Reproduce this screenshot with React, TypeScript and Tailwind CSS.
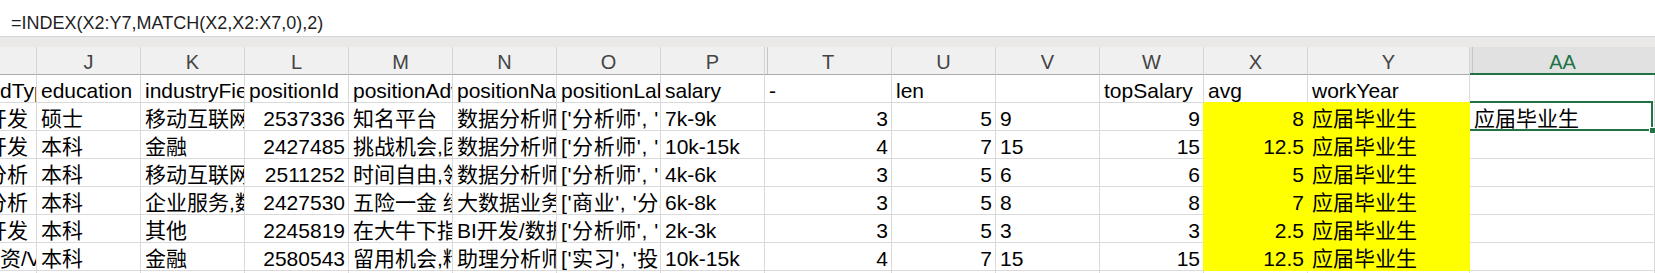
import React from 'react';

type Cell = { t?: string; r?: boolean };

const COLS = ['J', 'K', 'L', 'M', 'N', 'O', 'P', 'T', 'U', 'V', 'W', 'X', 'Y', 'AA'];
const WCLS = [
  'w-[104px]', 'w-[104px]', 'w-[104px]', 'w-[104px]', 'w-[104px]', 'w-[104px]', 'w-[104px]',
  'w-[127px]', 'w-[104px]', 'w-[104px]', 'w-[104px]', 'w-[104px]', 'w-[162px]', 'w-[185px]',
];

const L = (t: string): Cell => ({ t });
const R = (t: string): Cell => ({ t, r: true });
const E: Cell = {};

const ROWS: { i: string; iCls: string; cells: Cell[] }[] = [
  {
    i: 'secondType',
    iCls: '-ml-[56px]',
    cells: [L('education'), L('industryField'), L('positionId'), L('positionAdvantage'), L('positionName'), L('positionLables'), L('salary'), L('-'), L('len'), E, L('topSalary'), L('avg'), L('workYear'), E],
  },
  {
    i: '数据开发',
    iCls: '-ml-[56px]',
    cells: [L('硕士'), L('移动互联网'), R('2537336'), L('知名平台'), L('数据分析师'), L("['分析师', '数据分析']"), L('7k-9k'), R('3'), R('5'), L('9'), R('9'), R('8'), L('应届毕业生'), L('应届毕业生')],
  },
  {
    i: '数据开发',
    iCls: '-ml-[56px]',
    cells: [L('本科'), L('金融'), R('2427485'), L('挑战机会,团队好,扁平管理'), L('数据分析师'), L("['分析师', '数据分析']"), L('10k-15k'), R('4'), R('7'), L('15'), R('15'), R('12.5'), L('应届毕业生'), E],
  },
  {
    i: '数据分析',
    iCls: '-ml-[56px]',
    cells: [L('本科'), L('移动互联网'), R('2511252'), L('时间自由,领导nice'), L('数据分析师'), L("['分析师', '数据分析']"), L('4k-6k'), R('3'), R('5'), L('6'), R('6'), R('5'), L('应届毕业生'), E],
  },
  {
    i: '数据分析',
    iCls: '-ml-[56px]',
    cells: [L('本科'), L('企业服务,数据服务'), R('2427530'), L('五险一金 绩效奖金'), L('大数据业务分析'), L("['商业', '分析']"), L('6k-8k'), R('3'), R('5'), L('8'), R('8'), R('7'), L('应届毕业生'), E],
  },
  {
    i: '数据开发',
    iCls: '-ml-[56px]',
    cells: [L('本科'), L('其他'), R('2245819'), L('在大牛下指导'), L('BI开发/数据分析'), L("['分析师', '数据']"), L('2k-3k'), R('3'), R('5'), L('3'), R('3'), R('2.5'), L('应届毕业生'), E],
  },
  {
    i: '风险投资/VC',
    iCls: '-ml-[63px]',
    cells: [L('本科'), L('金融'), R('2580543'), L('留用机会,精英团队'), L('助理分析师'), L("['实习', '投资']"), L('10k-15k'), R('4'), R('7'), L('15'), R('15'), R('12.5'), L('应届毕业生'), E],
  },
  {
    i: '',
    iCls: '',
    cells: [E, E, E, E, E, E, E, E, E, E, E, E, E, E],
  },
];

function cellColor(row: number, col: number): string {
  const yellowRow = row >= 1 && row <= 6;
  if (yellowRow && (col === 11 || col === 12)) return 'bg-[#ffff00] border-[#ffff00]';
  if (yellowRow && col === 10) return 'border-b-[#dadada] border-r-[#ffff00]';
  if (row === 0 && (col === 11 || col === 12)) return 'border-b-[#ffff00] border-r-[#dadada]';
  return 'border-[#dadada]';
}

function HeaderRow() {
  return (
    <div className="flex h-[28px] bg-[#f0f0f0] text-[20px] leading-[20px] text-[#444444]">
      <div className="w-[37px] h-[28px] shrink-0 border-b border-r border-b-[#ababab] border-r-[#d5d5d5]" />
      {COLS.map((c, i) => {
        if (c === 'AA') {
          return (
            <div
              key={c}
              className="w-[185px] h-[28px] shrink-0 border-b-2 border-b-[#217346] bg-[#e1e1e1] text-[#217346] text-center pt-[5px] shadow-[inset_2px_0_0_#e1e1e1,inset_3px_0_0_#c6c6c6]"
            >
              {c}
            </div>
          );
        }
        const extra = c === 'T' ? ' shadow-[inset_2px_0_0_#f0f0f0,inset_3px_0_0_#c6c6c6]' : '';
        return (
          <div
            key={c}
            className={`${WCLS[i]} h-[28px] shrink-0 border-b border-r border-b-[#ababab] border-r-[#d5d5d5] text-center pt-[5px]${extra}`}
          >
            {c}
          </div>
        );
      })}
    </div>
  );
}

export default function App() {
  return (
    <div className="relative w-[1655px] h-[273px] overflow-hidden bg-white text-black font-['Liberation_Sans','Noto_Sans_CJK_SC',sans-serif]">
      <div className="h-[37px] border-b border-[#d4d4d4] bg-white pl-[11px] pt-[13px] text-[18px] leading-[20px] text-[#1f1f1f] whitespace-nowrap">
        =INDEX(X2:Y7,MATCH(X2,X2:X7,0),2)
      </div>
      <div className="h-[10px] bg-[#ebe8e8]" />
      <HeaderRow />
      <div className="text-[21px] leading-[20px]">
        {ROWS.map((row, ri) => (
          <div key={ri} className="flex h-[28px]">
            <div className="w-[37px] h-[28px] shrink-0 border-b border-r border-[#dadada] overflow-x-clip whitespace-nowrap pt-[6px]">
              <span className={`inline-block ${row.iCls}`}>{row.i}</span>
            </div>
            {row.cells.map((c, ci) => {
              const align = c.r ? 'text-right pr-[3px]' : 'pl-[4px]';
              const selected = ri === 1 && ci === 13;
              const track = ci === 5 && ri > 0 ? ' tracking-[0.6px]' : '';
              return (
                <div
                  key={ci}
                  className={`${WCLS[ci]} relative h-[28px] shrink-0 border-b border-r overflow-x-clip whitespace-nowrap pt-[6px] ${align} ${cellColor(ri, ci)}${track}`}
                >
                  {c.t}
                  {selected && (
                    <div className="absolute left-[-2px] top-[-2px] right-[1px] bottom-[-1px] border-2 border-[#217346]" />
                  )}
                </div>
              );
            })}
          </div>
        ))}
      </div>
      <div className="absolute left-[1649px] top-[127px] w-[7px] h-[7px] bg-[#217346] border border-white" />
    </div>
  );
}
